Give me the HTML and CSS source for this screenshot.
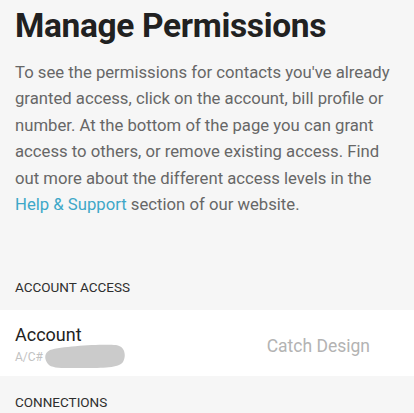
FILE: index.html
```html
<!DOCTYPE html>
<html lang="en">
<head>
<meta charset="utf-8">
<title>Manage Permissions</title>
<link rel="stylesheet" href="styles.css">
</head>
<body>
<main class="page">
  <header class="intro">
    <h1 class="title">Manage Permissions</h1>
    <p class="desc">To see the permissions for contacts you've already granted access, click on the account, bill profile or number. At the bottom of the page you can grant access to others, or remove existing access. Find out more about the different access levels in the <a class="link" href="#">Help &amp; Support</a> section of our website.</p>
  </header>
  <section class="section">
    <h2 class="section-head first">ACCOUNT ACCESS</h2>
    <div class="row">
      <div class="row-main">
        <div class="row-title">Account</div>
        <div class="row-sub">A/C#<svg class="blur" viewBox="0 0 83 26" aria-hidden="true"><path d="M7,7 C20,3 58,1 73,2 C81,3 84,11 80,19 C76,25 60,25 40,25 C22,25 9,26 5,21 C1,16 1,10 7,7 Z" fill="#cbcbcb"/></svg></div>
      </div>
      <div class="row-value">Catch Design</div>
    </div>
  </section>
  <section class="section">
    <h2 class="section-head">CONNECTIONS</h2>
  </section>
</main>
</body>
</html>
```

FILE: styles.css
```css
* { box-sizing: border-box; }
html, body {
  margin: 0;
  padding: 0;
  background: #f6f6f6;
}
body {
  font-family: Roboto, "Liberation Sans", Arial, sans-serif;
  overflow: hidden;
}
.page {
  display: flex;
  flex-direction: column;
}
.intro {
  padding: 5.5px 15px 0;
}
.title {
  margin: 0;
  font-size: 33.5px;
  line-height: 40px;
  font-weight: 700;
  color: #212121;
  letter-spacing: -0.35px;
}
.desc {
  margin: 14px 0 0;
  font-size: 16.7px;
  line-height: 26.6px;
  color: #676767;
}
.link {
  color: #3ea8c8;
  text-decoration: none;
}
.section-head {
  margin: 0;
  padding: 16px 15px 13px;
  font-size: 13.5px;
  line-height: 20px;
  font-weight: 400;
  color: #2e2e2e;
}
.section-head.first {
  padding-top: 58px;
}
.row {
  background: #fff;
  display: flex;
  align-items: center;
  justify-content: space-between;
  padding: 14px 44px 12px 15px;
}
.row-main {
  display: flex;
  flex-direction: column;
  gap: 4px;
}
.row-title {
  font-size: 18px;
  line-height: 22px;
  color: #222;
}
.row-sub {
  position: relative;
  font-size: 12px;
  line-height: 14px;
  color: #c2c2c2;
}
.blur {
  position: absolute;
  left: 28px;
  top: -7px;
  width: 83px;
  height: 26px;
  filter: blur(0.6px);
}
.row-value {
  font-size: 17.5px;
  line-height: 22px;
  color: #b3b3b3;
  padding-top: 4px;
}
```
